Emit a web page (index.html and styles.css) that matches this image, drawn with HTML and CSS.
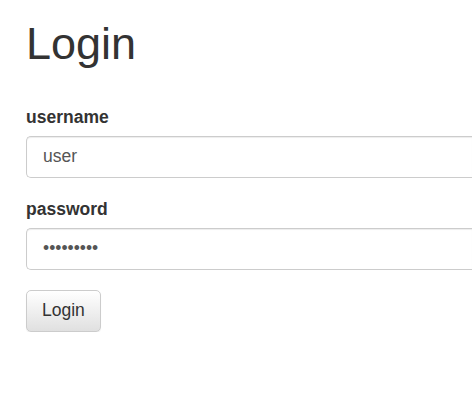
FILE: index.html
```html
<!DOCTYPE html>
<html lang="en">
<head>
  <meta charset="UTF-8" />
  <title>Login</title>
  <link rel="stylesheet" href="styles.css">
</head>
<body>

<div class="container">
  <h1>Login</h1>

  <form class="login-form">
    <div class="form-group">
      <label for="username">username</label>
      <input id="username" class="form-control" type="text" value="user">
    </div>
    <div class="form-group last">
      <label for="password">password</label>
      <input id="password" class="form-control" type="password" value="secretpw1">
    </div>
    <button type="submit" class="btn">Login</button>
  </form>
</div>

</body>
</html>
```

FILE: styles.css
```css
html, body {
  margin: 0;
  padding: 0;
  overflow: hidden;
  background: #fff;
}

body {
  font-family: 'Liberation Sans', Arial, sans-serif;
  color: #333;
}

.container {
  padding-left: 26px;
}

h1 {
  font-size: 45px;
  font-weight: 400;
  line-height: 1.1;
  margin: 19px 0 0;
}

.login-form {
  margin-top: 38px;
}

.form-group {
  margin-bottom: 21px;
}

.form-group.last {
  margin-bottom: 20px;
}

label {
  display: block;
  font-size: 17.5px;
  font-weight: 700;
  margin-bottom: 8px;
}

.form-control {
  display: block;
  box-sizing: border-box;
  width: 100%;
  height: 42px;
  padding: 0 16px;
  font-family: inherit;
  font-size: 17.5px;
  color: #555;
  background: #fff;
  border: 1px solid #ccc;
  border-right: none;
  border-radius: 5px 0 0 5px;
  box-shadow: inset 0 1px 1px rgba(0,0,0,0.075);
}

.btn {
  display: block;
  height: 42px;
  padding: 0 15px;
  font-family: inherit;
  font-size: 17.5px;
  color: #333;
  border: 1px solid #ccc;
  border-radius: 5px;
  background: linear-gradient(to bottom, #fff 0%, #e0e0e0 100%);
  box-shadow: inset 0 1px 0 rgba(255,255,255,0.15), 0 1px 1px rgba(0,0,0,0.075);
  cursor: pointer;
}
```
